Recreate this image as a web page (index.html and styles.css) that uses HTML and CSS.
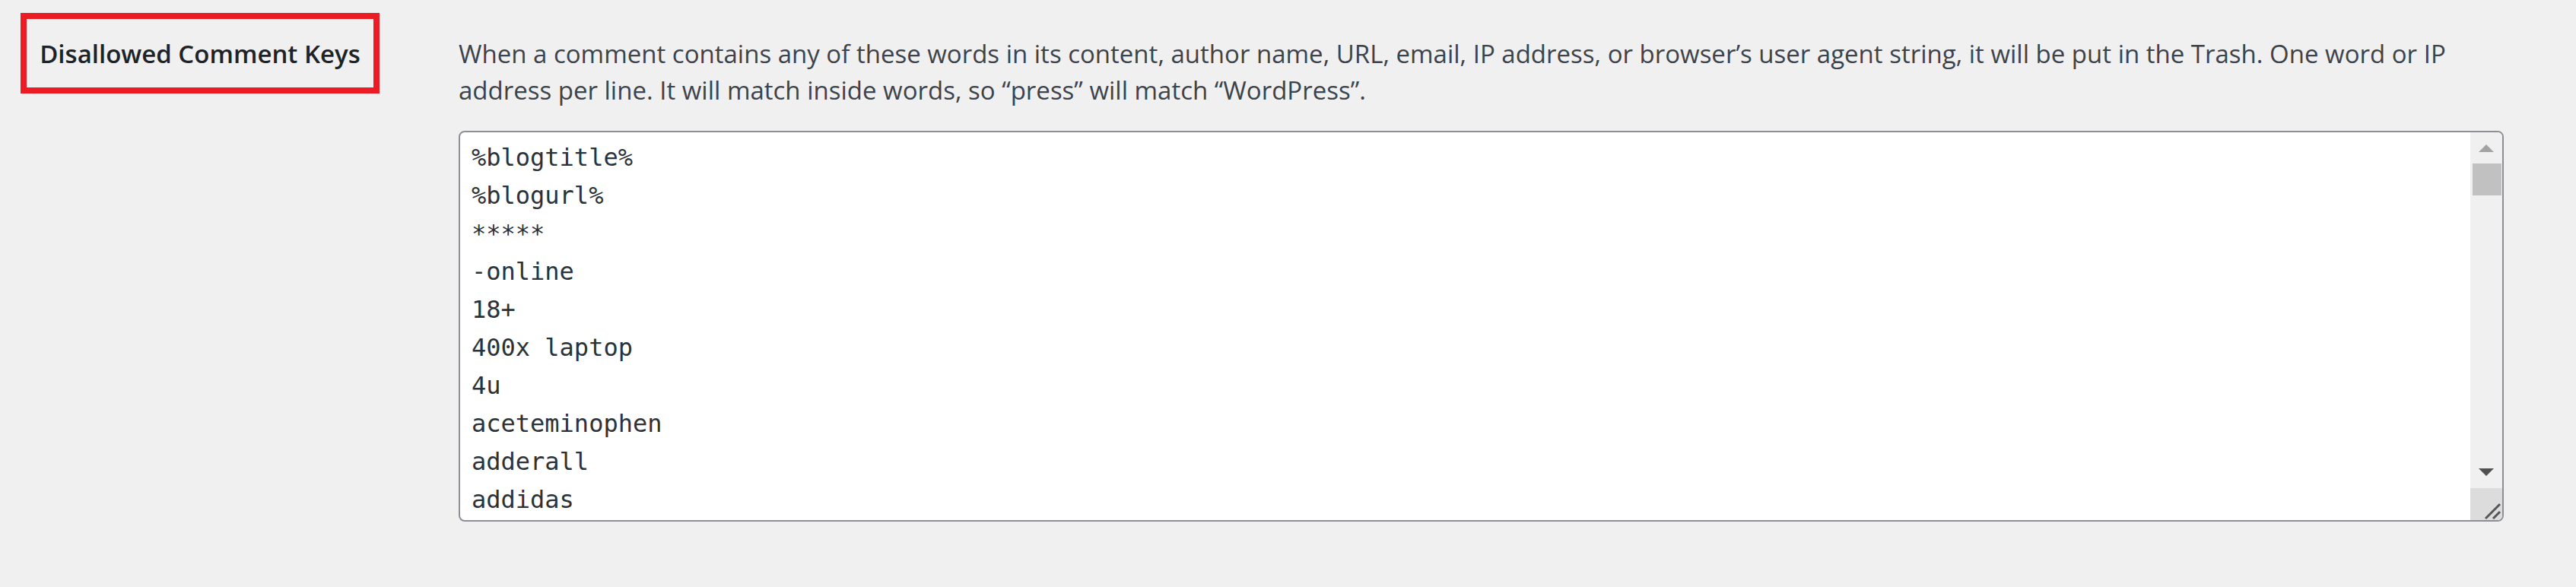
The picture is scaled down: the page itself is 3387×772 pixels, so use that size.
FILE: index.html
```html
<!DOCTYPE html>
<html lang="en">
<head>
<meta charset="utf-8">
<title>Discussion Settings</title>
<link rel="stylesheet" href="styles.css">
</head>
<body>
<div class="form-row">
  <div class="row-head">
    <div class="label-box">Disallowed Comment Keys</div>
  </div>
  <div class="row-body">
    <p class="desc">When a comment contains any of these words in its content, author name, URL, email, IP address, or browser’s user agent string, it will be put in the Trash. One word or IP<br>address per line. It will match inside words, so “press” will match “WordPress”.</p>
    <div class="textbox">
      <div class="lines">
        <div>%blogtitle%</div>
        <div>%blogurl%</div>
        <div>*****</div>
        <div>-online</div>
        <div>18+</div>
        <div>400x laptop</div>
        <div>4u</div>
        <div>aceteminophen</div>
        <div>adderall</div>
        <div>addidas</div>
      </div>
      <div class="scrollbar">
        <div class="sb-btn sb-up"><svg width="20" height="10" viewBox="0 0 20 10"><polygon points="0,10 10,0 20,10" fill="#a3a3a3"/></svg></div>
        <div class="sb-thumb"></div>
        <div class="sb-space"></div>
        <div class="sb-btn"><svg width="20" height="10" viewBox="0 0 20 10"><polygon points="0,0 20,0 10,10" fill="#505050"/></svg></div>
        <div class="sb-corner"><svg width="42" height="42" viewBox="0 0 42 42"><line x1="20" y1="40" x2="39" y2="21" stroke="#555" stroke-width="3"/><line x1="30" y1="40" x2="39" y2="31" stroke="#555" stroke-width="3"/></svg></div>
      </div>
    </div>
  </div>
</div>
</body>
</html>
```
FILE: styles.css
```css
html, body { margin: 0; padding: 0; }
body {
  background: #f0f0f1;
  font-family: "Open Sans", "Liberation Sans", sans-serif;
  color: #3c434a;
}
.form-row {
  display: flex;
  padding: 17px 95px 0 27px;
}
.row-head {
  width: 576px;
  flex: none;
}
.label-box {
  box-sizing: border-box;
  width: 472px;
  height: 106px;
  border: 8px solid #ed1c24;
  display: flex;
  align-items: center;
  justify-content: center;
  font-weight: 600;
  font-size: 33px;
  color: #1d2327;
  white-space: nowrap;
}
.row-body { flex: 1; min-width: 0; }
.desc {
  margin: 30px 0 0;
  font-size: 33px;
  line-height: 47.5px;
  white-space: nowrap;
}
.textbox {
  margin-top: 30px;
  box-sizing: border-box;
  height: 514px;
  border: 2px solid #8c8f94;
  border-radius: 8px;
  background: #fff;
  display: flex;
  overflow: hidden;
}
.lines {
  flex: 1;
  padding: 8px 0 0 15px;
  font-family: "DejaVu Sans Mono", "Liberation Mono", monospace;
  font-size: 32px;
  line-height: 50px;
  color: #2c3338;
  overflow: hidden;
}
.scrollbar {
  width: 42px;
  flex: none;
  background: #f0f0f0;
  display: flex;
  flex-direction: column;
}
.sb-btn {
  height: 42px;
  display: flex;
  align-items: center;
  justify-content: center;
}
.sb-up { height: 41px; }
.sb-thumb {
  height: 42px;
  margin: 0 1px 0 3px;
  background: #c1c1c1;
}
.sb-space { flex: 1; }
.sb-corner {
  height: 42px;
  background: #dcdcdc;
}
.sb-corner svg { display: block; }
```
